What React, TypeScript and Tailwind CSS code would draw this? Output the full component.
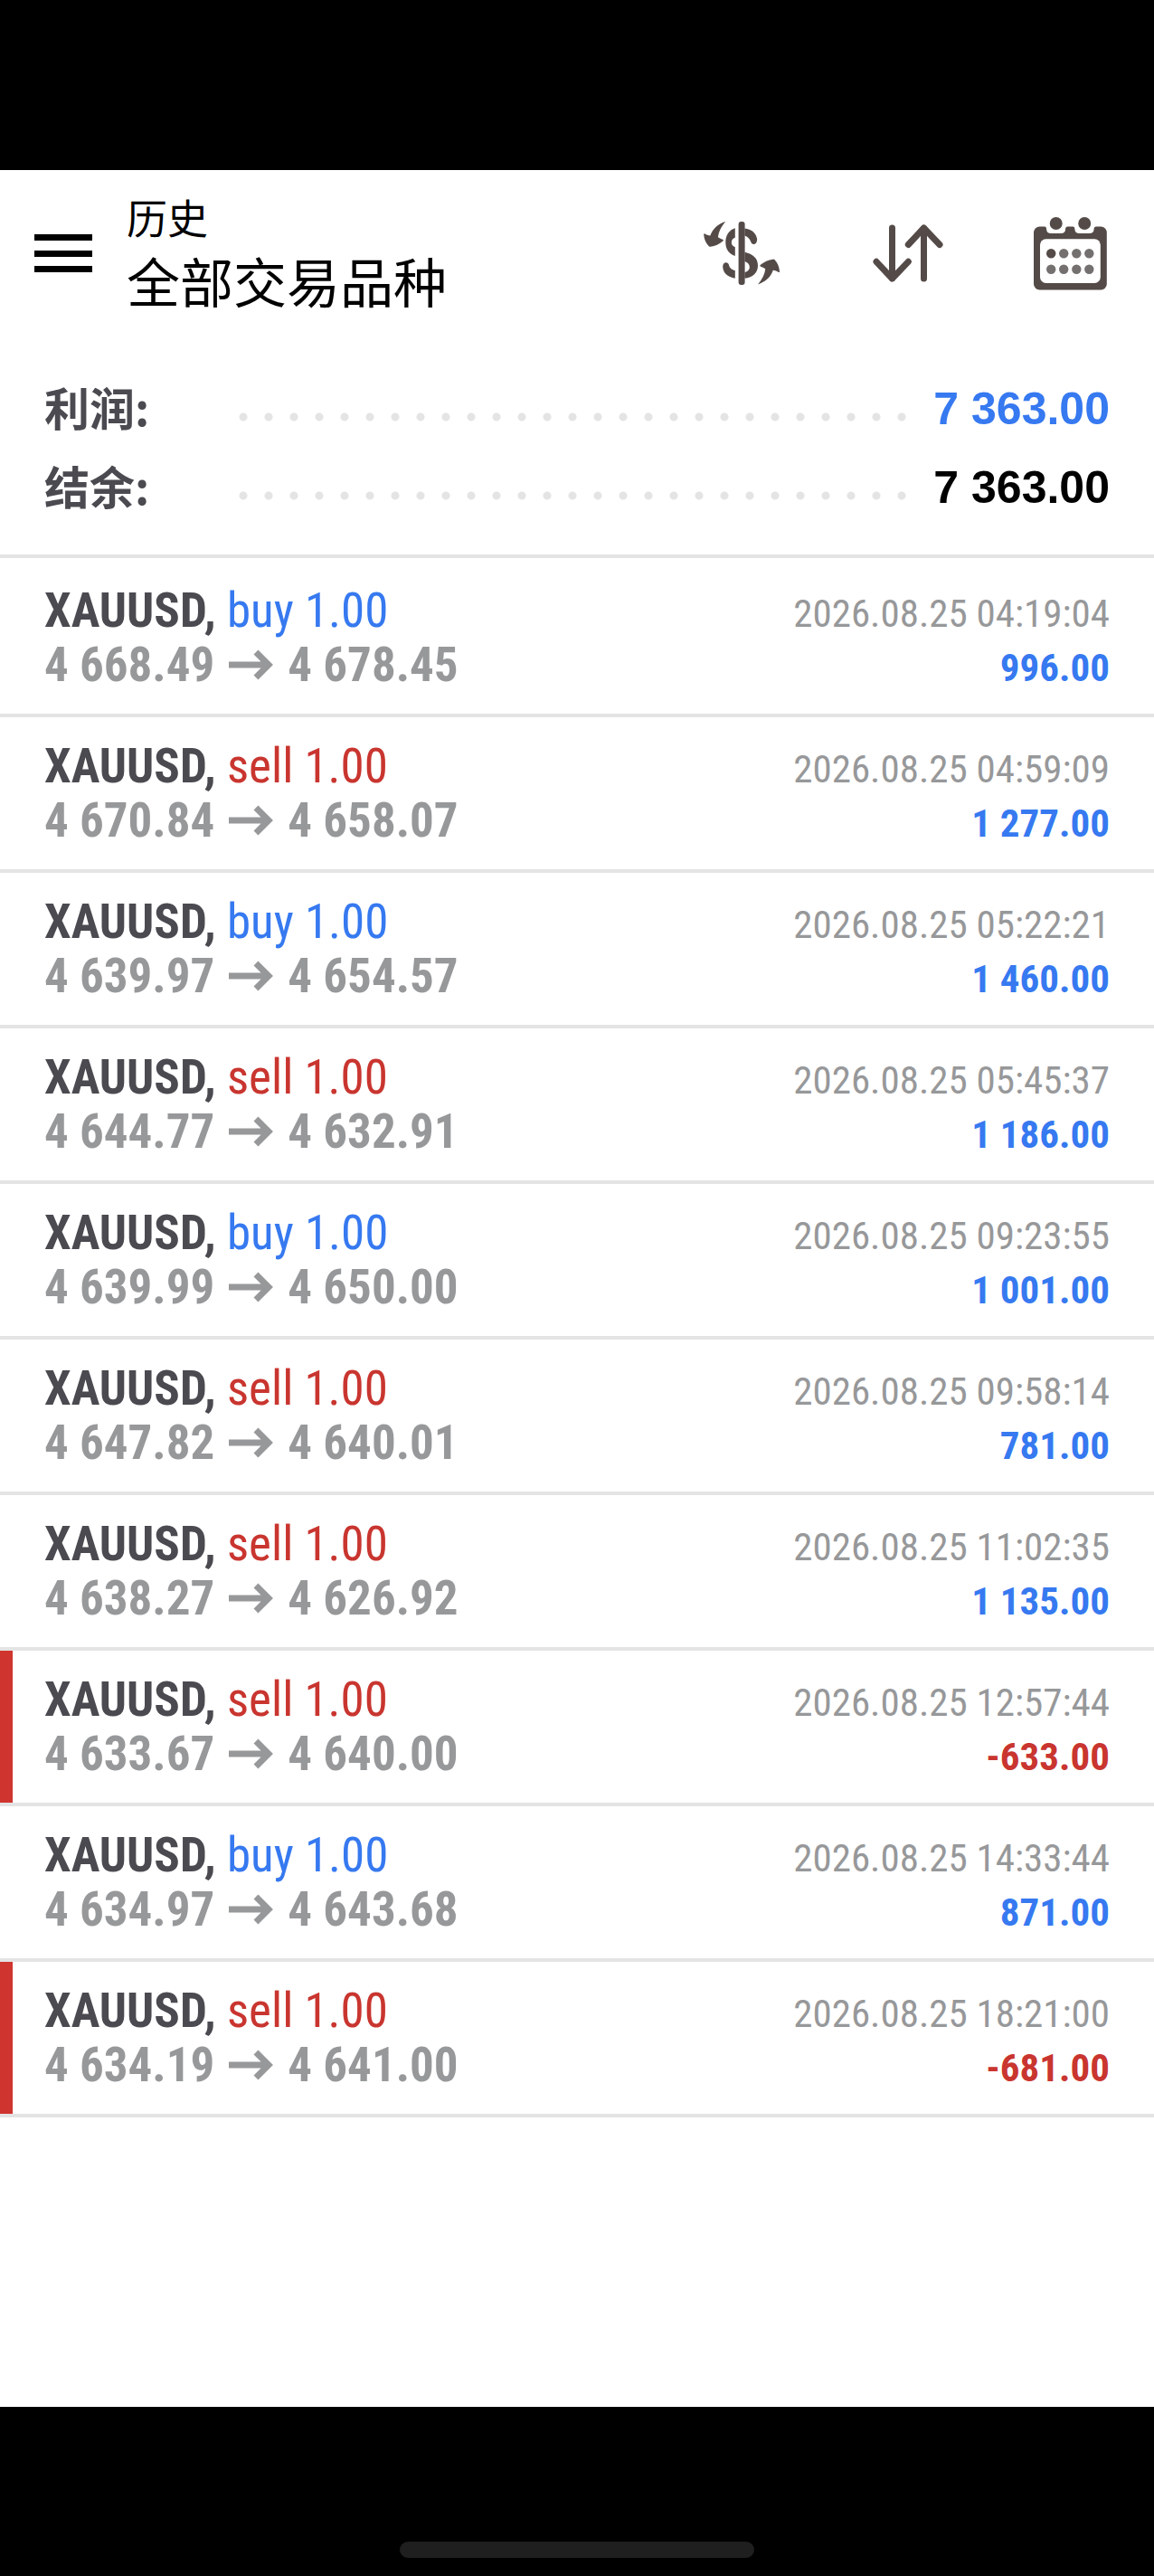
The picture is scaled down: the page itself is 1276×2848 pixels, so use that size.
type Deal = {
  side: "buy" | "sell";
  open: string;
  close: string;
  time: string;
  profit: string;
};

const DEALS: Deal[] = [
  { side: "buy", open: "4 668.49", close: "4 678.45", time: "2026.08.25 04:19:04", profit: "996.00" },
  { side: "sell", open: "4 670.84", close: "4 658.07", time: "2026.08.25 04:59:09", profit: "1 277.00" },
  { side: "buy", open: "4 639.97", close: "4 654.57", time: "2026.08.25 05:22:21", profit: "1 460.00" },
  { side: "sell", open: "4 644.77", close: "4 632.91", time: "2026.08.25 05:45:37", profit: "1 186.00" },
  { side: "buy", open: "4 639.99", close: "4 650.00", time: "2026.08.25 09:23:55", profit: "1 001.00" },
  { side: "sell", open: "4 647.82", close: "4 640.01", time: "2026.08.25 09:58:14", profit: "781.00" },
  { side: "sell", open: "4 638.27", close: "4 626.92", time: "2026.08.25 11:02:35", profit: "1 135.00" },
  { side: "sell", open: "4 633.67", close: "4 640.00", time: "2026.08.25 12:57:44", profit: "-633.00" },
  { side: "buy", open: "4 634.97", close: "4 643.68", time: "2026.08.25 14:33:44", profit: "871.00" },
  { side: "sell", open: "4 634.19", close: "4 641.00", time: "2026.08.25 18:21:00", profit: "-681.00" },
];

const SUMMARY = [
  { label: "利润:", value: "7 363.00", color: "text-[#3679f0]" },
  { label: "结余:", value: "7 363.00", color: "text-black" },
];

function MenuIcon() {
  return (
    <svg width="64" height="43" viewBox="0 0 64 43" fill="currentColor" aria-hidden>
      <path d="M0 0h64v7H0zM0 18h64v7H0zM0 35h64v7H0z" />
    </svg>
  );
}

function SymbolIcon() {
  const arrow = "M27.2 3C19 5.500 12.500 11.500 10.400 18.600C8 18.400 6 17.600 4.200 16.300Q3 16.200 3.200 17.500C3.600 22.500 5.500 27 8.800 30.300Q9.500 31 10.600 30.700C15.500 30.200 20.500 28 24.600 24.300Q25.200 23.600 24.500 23C22.500 22.200 20.500 21.300 18.900 20.200C19.600 14 22.500 8.500 27.200 3Z";
  return (
    <svg width="92" height="76" viewBox="0 0 92 76" fill="currentColor" aria-hidden>
      <path d={arrow} />
      <path d={arrow} transform="rotate(180 45.100 37.700)" />
      <rect x="41.600" y="3" width="7" height="70" rx="3" />
      {/* left half of the S */}
      <path d="M37.800 10.300C31 12.500 27.300 18 27.300 26C27.300 33.500 31 39 37.800 41V31.200C35.300 30.200 33.800 28.500 33.800 26C33.800 23.500 35.300 21.500 37.800 20.800Z" />
      <path d="M37.800 57C34.500 56.200 31.600 54.500 31 51C30 46.800 24.200 47.800 24.200 52.500C24.200 59.500 29.500 64.500 37.800 65.700Z" />
      {/* right half */}
      <path d="M48.400 10.500C55.500 11.300 60.500 15 62 21.500C62.700 25.500 60.500 28.300 58 28C56 27.800 55.500 26.300 55 24.800C54 21.500 51.500 19.500 48.400 18.400Z" />
      <path d="M48.400 36.800C57.500 39 63 43.500 63 51.500C63 59.500 57.500 65 48.400 65.800V59C51.500 58.500 53.800 56.500 53.800 53.300C53.800 50 51.500 48 48.400 47Z" />
    </svg>
  );
}

function SortIcon() {
  return (
    <svg
      width="82"
      height="68"
      viewBox="0 0 82 68"
      fill="none"
      stroke="currentColor"
      strokeWidth="7"
      strokeLinecap="round"
      strokeLinejoin="round"
      aria-hidden
    >
      <path d="M23.500 6v56M6 43.300L23.500 62L41.300 43.300" />
      <path d="M58.500 62V6M41.300 24.500L58.500 6L76 24.500" />
    </svg>
  );
}

function CalendarIcon() {
  const columns = [21.2, 35.2, 49.3, 63.3];
  return (
    <svg width="86" height="84" viewBox="0 0 86 84" fill="currentColor" aria-hidden>
      <rect x="2" y="12.500" width="80.800" height="70" rx="6.500" />
      <rect x="9" y="26.300" width="66.800" height="48.700" rx="6.500" fill="white" />
      <path d="M14 12C16 13 16 14 16.200 16Q16.500 20 21 20H32Q36.700 20 37 16C37 14 37.500 13 39.500 12Z" fill="white" />
      <path d="M45.300 12C47.300 13 47.300 14 47.500 16Q47.800 20 52.500 20H63.500Q68.200 20 68.500 16C68.500 14 69 13 71 12Z" fill="white" />
      <circle cx="26.700" cy="9" r="7" />
      <circle cx="58.200" cy="9" r="7" />
      {columns.map((x, i) => (
        <g key={x} fill="#757070">
          <circle cx={x} cy="42.300" r="5.200" fill={i === 0 ? "#544b48" : undefined} />
          <circle cx={x} cy="59.700" r="5.200" />
        </g>
      ))}
    </svg>
  );
}

function ArrowIcon() {
  return (
    <svg width="49" height="36" viewBox="0 0 49 36" fill="none" stroke="currentColor" strokeWidth="7" className="mx-4" aria-hidden>
      <path d="M0 18h44M30 4L44 18L30 32" />
    </svg>
  );
}

function DealRow({ deal }: { deal: Deal }) {
  const loss = deal.profit.startsWith("-");
  return (
    <li className={`border-b-4 border-[#e4e4e4] px-[49px] py-6 ${loss ? "bg-[linear-gradient(#d0342f,#d0342f)] bg-[length:14px_100%] bg-no-repeat" : ""}`}>
      <div className="flex items-baseline justify-between text-[53px] leading-[60px]">
        <span className="font-bold text-[#4b4a50]">
          XAUUSD,{" "}
          <span className={`font-normal ${deal.side === "buy" ? "text-[#3679f0]" : "text-[#c9352f]"}`}>
            {deal.side} 1.00
          </span>
        </span>
        <time className="text-[43px] leading-none text-[#97989a]">{deal.time}</time>
      </div>
      <div className="flex items-baseline justify-between text-[53px] leading-[60px] font-bold text-[#97989a]">
        <span className="flex items-center">
          {deal.open}
          <ArrowIcon />
          {deal.close}
        </span>
        <span className={`text-[43px] leading-none ${loss ? "text-[#c9352f]" : "text-[#3679f0]"}`}>{deal.profit}</span>
      </div>
    </li>
  );
}

export default function App() {
  return (
    <div className="flex min-h-screen flex-col bg-white font-['Roboto_Condensed','Liberation_Sans_Narrow','Noto_Sans_CJK_SC',sans-serif]">
      <div className="h-[188px] bg-black" />

      <header className="flex h-[184px] items-center pr-[49px] pl-[38px] text-[#544b48]">
        <button type="button" aria-label="菜单" className="text-black">
          <MenuIcon />
        </button>
        <div className="ml-[38px] flex-1 font-['Noto_Sans_CJK_SC',sans-serif] text-black">
          <p className="text-[45px] leading-[60px]">历史</p>
          <h1 className="text-[59px] leading-[80px]">全部交易品种</h1>
        </div>
        <div className="flex items-center gap-24">
          <button type="button" aria-label="交易品种"><SymbolIcon /></button>
          <button type="button" aria-label="排序"><SortIcon /></button>
          <button type="button" aria-label="日期"><CalendarIcon /></button>
        </div>
      </header>

      <dl className="border-b-4 border-[#e4e4e4] px-[49px] pt-[34px] pb-[33px]">
        {SUMMARY.map(({ label, value, color }) => (
          <div key={label} className="flex h-[87px] items-center text-[50px] font-bold">
            <dt className="w-[206px] font-['Noto_Sans_CJK_SC',sans-serif] text-[#4b4a50]">{label}</dt>
            <dd className={`flex flex-1 items-center pt-1.5 font-['Liberation_Sans',sans-serif] ${color}`}>
              <span
                aria-hidden
                className="mt-4 mr-5 h-[10px] flex-1 bg-[radial-gradient(circle,#e4e4e4_4px,transparent_5px)] bg-[length:28px_10px] bg-repeat-x"
              />
              {value}
            </dd>
          </div>
        ))}
      </dl>

      <main className="flex-1 pt-1">
        <ul>
          {DEALS.map((deal) => (
            <DealRow key={deal.time} deal={deal} />
          ))}
        </ul>
      </main>

      <footer className="flex h-[187px] items-end justify-center bg-black pb-5">
        <div className="h-[18px] w-[392px] rounded-full bg-[#1f1f1f]" />
      </footer>
    </div>
  );
}
